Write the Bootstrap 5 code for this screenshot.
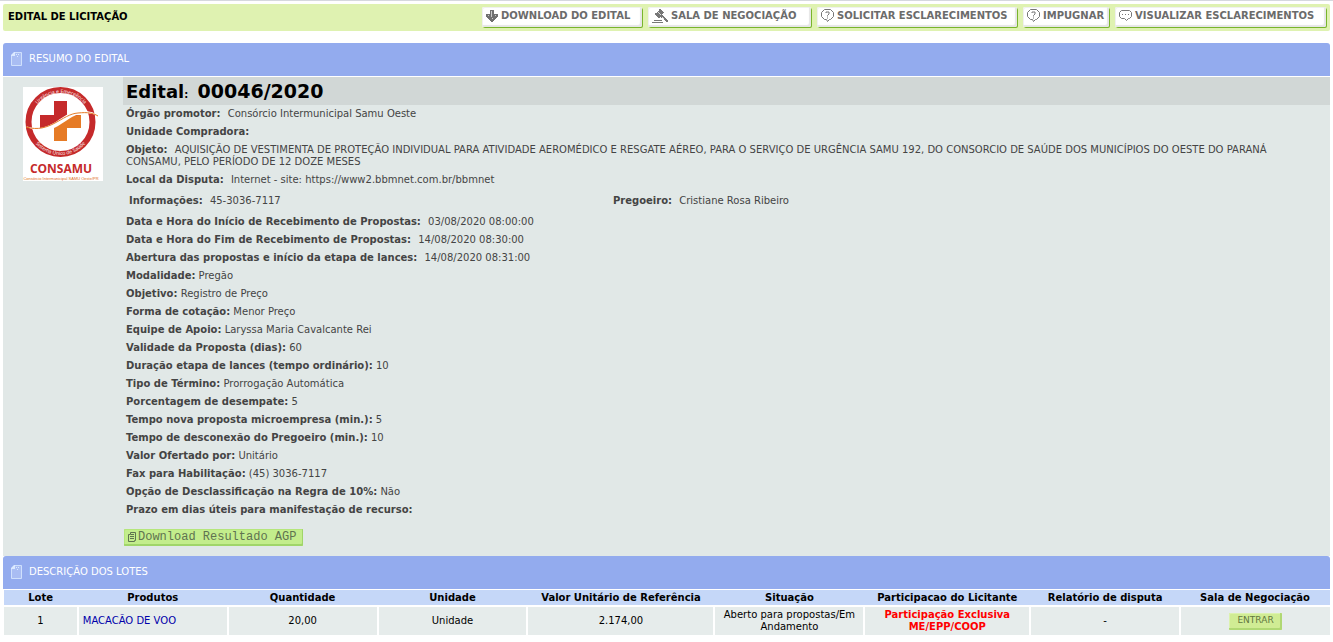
<!DOCTYPE html>
<html lang="pt-BR">
<head>
<meta charset="utf-8">
<meta name="viewport" content="width=device-width, initial-scale=1">
<title>Edital de Licitação</title>
<link href="https://cdn.jsdelivr.net/npm/bootstrap@5.3.0/dist/css/bootstrap.min.css" rel="stylesheet">
<style>
  body { font-family: Verdana, "DejaVu Sans", sans-serif; font-size: 10px; line-height: 12px; color: #444; background: #fff; border-top: 1px solid #d6d8de; }
  .page { padding: 3px 3px 8px; }
  .topbar { background: #dff2b1; min-height: 27px; border-radius: 2px; padding: 0 4px 1px 5px; margin-bottom: 12px; }
  .topbar h1 { font-size: 10px; line-height: 12px; font-weight: bold; color: #000; }
  .tools { gap: 6px; }
  .tool { height: 20px; padding: 0 4px 2px; gap: 3px; font-size: 10px; line-height: 12px; font-weight: bold; color: #6b6b6b; background: #fff; border: 0; border-radius: 2px; box-shadow: inset -2px -2px 1px #e6e6e6, inset 1px 1px 0 #f0f0f0, 1px 1px 0 #79b52c; white-space: nowrap; }
  .tool svg { flex: none; }
  .w-down { width: 160px; } .w-room { width: 163px; } .w-ask { width: 200px; } .w-imp { width: 86px; } .w-view { width: 211px; }
  .section-head { background: #93abee; min-height: 33px; padding: 0 8px 1px; gap: 7px; border-radius: 3px 3px 0 0; }
  .section-head h2 { font-size: 10px; line-height: 12px; font-weight: normal; color: #fff; }
  .summary { background: #e1e8e7; margin-top: 1px; padding-bottom: 10px; }
  .logo-side { width: 120px; padding: 10px 20px; flex: none; }
  .edital-title { background: #d1d7d6; color: #000; font-size: 18px; line-height: 28px; height: 28px; font-weight: bold; padding-left: 3px; }
  .edital-title small { font-size: 10px; line-height: 12px; font-weight: bold; }
  .edital-title span { margin-left: 3px; font-size: 19px; }
  .fields p { margin: 0; padding: 3px 16px 3px 3px; }
  .fields .wide b { margin-right: 4px; }
  .fields .contact { padding: 6px; }
  .contact > div:first-child { width: 40.5%; }
  .btn-agp { margin: 10px 0 0 1px; height: 17px; padding: 0 7px 0 4px; gap: 2px; border: 0; border-radius: 1px; background: #c3ed8c; color: #5f7350; font: 12px/13px "Liberation Mono", monospace; box-shadow: inset -1px -2px 0 #a0d569, inset 1px 1px 0 #b5e67b; }
  .lots { table-layout: fixed; width: 100%; margin: 1px 0 0; color: #000; border-collapse: collapse; }
  .lots th { background: #c5d7f8; text-align: center; padding: 2px 0 1px; font-size: 10px; line-height: 12px; }
  .lots td { background: #e6eceb; border: 2px solid #fff; border-bottom: 0; padding: 2px 4px; text-align: center; vertical-align: middle; }
  .lots td:first-child { border-left-width: 1px; } .lots td:last-child { border-right: 0; }
  .lots a { color: #00a; text-decoration: none; }
  .exclusive { color: #f00; font-weight: bold; }
  .btn-enter { display: block; margin: 0 auto; height: 17px; width: 53px; padding: 0 0 2px; border: 0; border-radius: 1px; font-size: 9px; line-height: 12px; color: #62773f; background: #d0ec94; box-shadow: inset -2px -2px 0 #b0d873, inset 1px 1px 0 #dcf2ae; }
  .lots .c-lot { width: 5.6%; } .lots .c-mid { width: 11.3%; } .lots .c-val { width: 14.1%; } .lots .c-part { width: 12.5%; }
</style>
</head>
<body>
<main class="page">
  <header class="topbar d-flex align-items-center justify-content-between">
    <h1 class="m-0">EDITAL DE LICITAÇÃO</h1>
    <div class="tools d-flex">
      <button type="button" class="tool w-down d-flex align-items-center">
        <svg width="12" height="12" viewBox="0 0 12 12" fill="#6f6f6f" aria-hidden="true"><path d="M4 0h4v4h4v3h-1v1h-1v1H9v1H8v1H7v1H5v-1H4v-1H3V9H2V8H1V7H0V4h4z"/><path d="M5 1h1v6H5zM2 5h1v1H2zM9 5h1v1H9zM6 8h1v1H6z" fill="#c8c8c8"/></svg>
        DOWNLOAD DO EDITAL</button>
      <button type="button" class="tool w-room d-flex align-items-center">
        <svg width="16" height="16" viewBox="0 0 16 16" fill="#777" aria-hidden="true"><path d="M7 1h2v1h1v1h1v1h1v1h-1v1h-1v1h1v1h1v1h1v1h1v1h1v1h1v2h-2v-1h-1v-1h-1v-1h-1v-1H9V9H8v1H6V9H5V8H4V7H3V5h2V4h1V3h1z"/><path d="M6 4h1v1h1v1h1v1H8V6H7V5H6zM10 9h1v1h1v1h-1v-1h-1z" fill="#ddd"/><path d="M2 12h8v1H2zM0 14h11v1H0z"/></svg>
        SALA DE NEGOCIAÇÃO</button>
      <button type="button" class="tool w-ask d-flex align-items-center">
        <svg width="13" height="14" viewBox="0 0 13 14" fill="none" stroke="#777" aria-hidden="true"><path d="M3.5.5h6l3 3v4l-3 3h-1l-2 2-1-2h-2l-3-3v-4z"/><path d="M5 4V3h3v2L6.5 6.5v1M6 9h1"/></svg>
        SOLICITAR ESCLARECIMENTOS</button>
      <button type="button" class="tool w-imp d-flex align-items-center">
        <svg width="13" height="14" viewBox="0 0 13 14" fill="none" stroke="#777" aria-hidden="true"><path d="M3.5.5h6l3 3v4l-3 3h-1l-2 2-1-2h-2l-3-3v-4z"/><path d="M5 4V3h3v2L6.5 6.5v1M6 9h1"/></svg>
        IMPUGNAR</button>
      <button type="button" class="tool w-view d-flex align-items-center">
        <svg width="13" height="12" viewBox="0 0 13 12" fill="none" stroke="#777" aria-hidden="true"><path d="M2.5.5h8l2 2v4l-2 2h-1l-2 2-2-2h-3l-2-2v-4z"/><path d="M3 4.5h1M6 4.5h1M9 4.5h1"/></svg>
        VISUALIZAR ESCLARECIMENTOS</button>
    </div>
  </header>

  <section>
    <div class="section-head d-flex align-items-center">
      <svg width="11" height="14" viewBox="0 0 11 14" aria-hidden="true"><path d="M3.5.5h7v13H.5v-10z" fill="#a9bdf3" stroke="#cfe0fc"/><path d="M0 4V3l3-3h1v4z" fill="#dbe9ff"/><path d="M5 2h1v1H5zM7 2h1v1H7zM6 4h1v1H6z" fill="#dbe9ff"/></svg>
      <h2 class="m-0">RESUMO DO EDITAL</h2>
    </div>
    <div class="summary d-flex">
      <div class="logo-side">
        <svg width="80" height="94" viewBox="0 0 80 94" role="img" aria-label="CONSAMU" class="d-block" font-family="Open Sans, sans-serif" text-anchor="middle">
          <defs><path id="arcTop" d="M8 36a30 30 0 0 1 60 0"/><path id="arcBottom" d="M4.5 35a33 33 0 0 0 66 0"/></defs>
          <path fill="#fff" d="M0 0h80v94H0z"/>
          <circle cx="37.5" cy="35" r="32" fill="none" stroke="#c52a2b" stroke-width="6"/>
          <path d="M31 14h13v14h14v13H44v13H31V41H17V28h14z" fill="#c52a2b"/>
          <path d="M31 41c8-5 15-13 27-13v13H44v13H31z" fill="#e67b26"/>
          <path d="M3 39c24 9 36-14 52-15 10-1 17 2 22 5-21-7-27 1-42 10-12 7-24 6-32 0z" fill="#fff"/>
          <path d="M3 40c24 7 36-13 52-14 10-1 15 0 20 3" fill="none" stroke="#e67b26"/>
          <g fill="#fff" font-size="5"><text><textPath href="#arcTop" startOffset="50%">Urgência e Emergência</textPath></text><text><textPath href="#arcBottom" startOffset="50%">Sistema Único de Saúde</textPath></text></g>
          <text x="38" y="86" font-size="12" font-weight="bold" fill="#c52a2b">CONSAMU</text>
          <text x="38" y="93" font-size="4" font-family="Liberation Sans, sans-serif" fill="#e0701c">Consórcio Intermunicipal SAMU Oeste/PR</text>
        </svg>
      </div>
      <div class="fields flex-grow-1">
        <div class="edital-title">Edital<small>:</small> <span>00046/2020</span></div>
        <p class="wide"><b>Órgão promotor:</b> Consórcio Intermunicipal Samu Oeste</p>
        <p><b>Unidade Compradora:</b></p>
        <p class="wide"><b>Objeto:</b> AQUISIÇÃO DE VESTIMENTA DE PROTEÇÃO INDIVIDUAL PARA ATIVIDADE AEROMÉDICO E RESGATE AÉREO, PARA O SERVIÇO DE URGÊNCIA SAMU 192, DO CONSORCIO DE SAÚDE DOS MUNICÍPIOS DO OESTE DO PARANÁ CONSAMU, PELO PERÍODO DE 12 DOZE MESES</p>
        <p class="wide"><b>Local da Disputa:</b> Internet - site: https://www2.bbmnet.com.br/bbmnet</p>
        <div class="contact wide d-flex"><div><b>Informações:</b> 45-3036-7117</div><div><b>Pregoeiro:</b> Cristiane Rosa Ribeiro</div></div>
        <p class="wide"><b>Data e Hora do Início de Recebimento de Propostas:</b> 03/08/2020 08:00:00</p>
        <p class="wide"><b>Data e Hora do Fim de Recebimento de Propostas:</b> 14/08/2020 08:30:00</p>
        <p class="wide"><b>Abertura das propostas e início da etapa de lances:</b> 14/08/2020 08:31:00</p>
        <p><b>Modalidade:</b> Pregão</p>
        <p><b>Objetivo:</b> Registro de Preço</p>
        <p><b>Forma de cotação:</b> Menor Preço</p>
        <p><b>Equipe de Apoio:</b> Laryssa Maria Cavalcante Rei</p>
        <p><b>Validade da Proposta (dias):</b> 60</p>
        <p><b>Duração etapa de lances (tempo ordinário):</b> 10</p>
        <p><b>Tipo de Término:</b> Prorrogação Automática</p>
        <p><b>Porcentagem de desempate:</b> 5</p>
        <p><b>Tempo nova proposta microempresa (min.):</b> 5</p>
        <p><b>Tempo de desconexão do Pregoeiro (min.):</b> 10</p>
        <p><b>Valor Ofertado por:</b> Unitário</p>
        <p><b>Fax para Habilitação:</b> (45) 3036-7117</p>
        <p><b>Opção de Desclassificação na Regra de 10%:</b> Não</p>
        <p><b>Prazo em dias úteis para manifestação de recurso:</b></p>
        <button type="button" class="btn-agp d-flex align-items-center">
          <svg width="8" height="11" viewBox="0 0 8 11" fill="none" stroke="#5f7350" aria-hidden="true"><path d="M2.5.5h5v8h-1v1h-6v-7h2zM3 2.5h3M2 4.5h4M2 6.5h4"/></svg>
          Download Resultado AGP</button>
      </div>
    </div>
  </section>

  <section>
    <div class="section-head d-flex align-items-center">
      <svg width="11" height="14" viewBox="0 0 11 14" aria-hidden="true"><path d="M3.5.5h7v13H.5v-10z" fill="#a9bdf3" stroke="#cfe0fc"/><path d="M0 4V3l3-3h1v4z" fill="#dbe9ff"/><path d="M5 2h1v1H5zM7 2h1v1H7zM6 4h1v1H6z" fill="#dbe9ff"/></svg>
      <h2 class="m-0">DESCRIÇÃO DOS LOTES</h2>
    </div>
    <table class="lots">
      <thead>
        <tr><th class="c-lot">Lote</th><th class="c-mid">Produtos</th><th class="c-mid">Quantidade</th><th class="c-mid">Unidade</th><th class="c-val">Valor Unitário de Referência</th><th class="c-mid">Situação</th><th class="c-part">Participacao do Licitante</th><th class="c-mid">Relatório de disputa</th><th class="c-mid">Sala de Negociação</th></tr>
      </thead>
      <tbody>
        <tr><td>1</td><td class="text-start"><a href="#">MACACÃO DE VOO</a></td><td>20,00</td><td>Unidade</td><td>2.174,00</td><td>Aberto para propostas/Em Andamento</td><td class="exclusive">Participação Exclusiva ME/EPP/COOP</td><td>-</td><td><button type="button" class="btn-enter">ENTRAR</button></td></tr>
      </tbody>
    </table>
  </section>
</main>
<script src="https://cdn.jsdelivr.net/npm/bootstrap@5.3.0/dist/js/bootstrap.bundle.min.js"></script>
</body>
</html>
